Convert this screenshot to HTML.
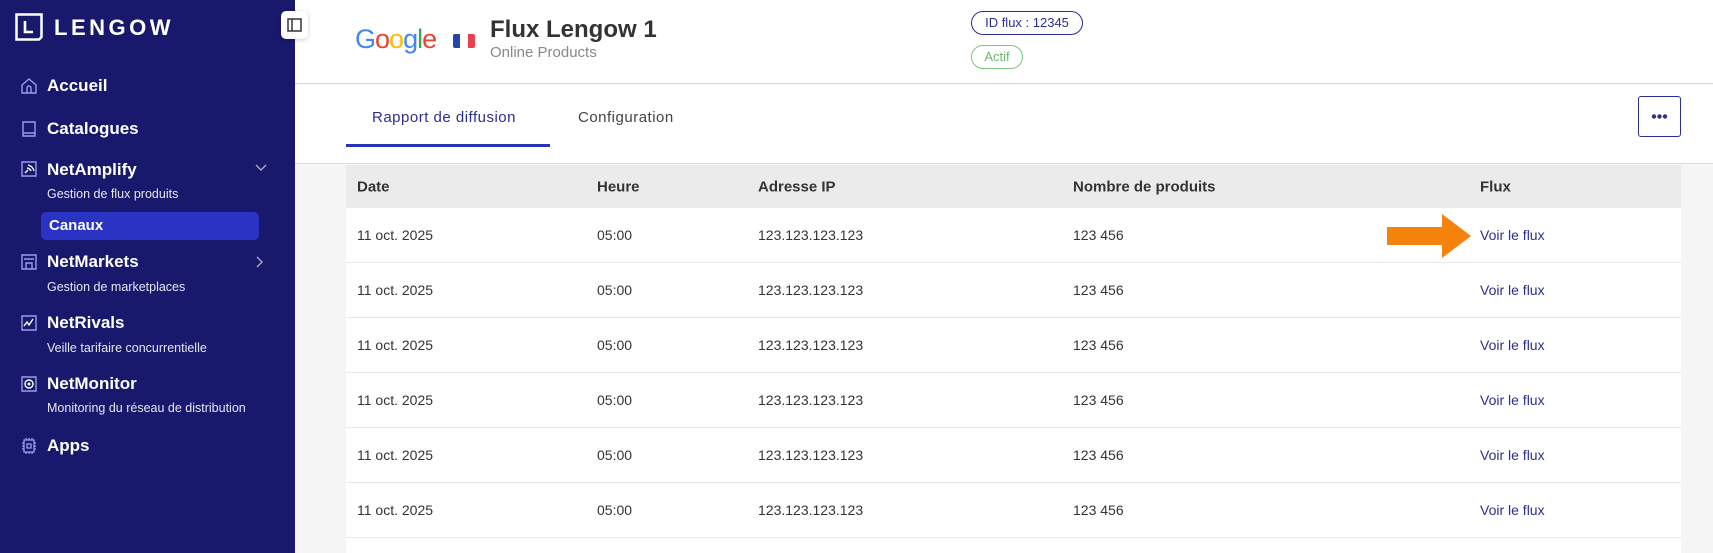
<!DOCTYPE html>
<html style="width:1713px;height:553px;overflow:hidden"><head><meta charset="utf-8"><style>
*{margin:0;padding:0;box-sizing:border-box}
body{width:1713px;height:553px;overflow:hidden;font-family:"Liberation Sans",sans-serif;background:#f5f5f5;position:relative}
.sb{position:absolute;left:0;top:0;width:295px;height:553px;background:#18196c;color:#fff}
.abs{position:absolute}
.nav{position:absolute;left:47px;font-weight:bold;font-size:17px;color:#fff;line-height:20px}
.sub{position:absolute;left:47px;font-size:12.5px;color:#e6e6f5;line-height:16px}
.ic{position:absolute;left:20px;width:18px;height:18px}
.hdr{position:absolute;left:295px;top:0;width:1418px;height:84px;background:#fff;border-bottom:1px solid #ddd}
.tabs{position:absolute;left:295px;top:85px;width:1418px;height:79px;background:#fff;border-bottom:1px solid #ddd}
.tbl{position:absolute;left:346px;top:165px;width:1335px;height:388px;background:#fff;overflow:hidden}
.th{height:43px;background:#ebebeb;position:relative;font-weight:bold;font-size:15px;color:#333}
.tr{height:55px;border-bottom:1px solid #e8e8e8;position:relative;font-size:14px;color:#333}
.c{position:absolute;top:50%;transform:translateY(-50%)}
.l{color:#2b2f8f}
</style></head><body>
<div class="sb">
  <svg class="abs" style="left:15px;top:13px" width="28" height="28" viewBox="0 0 28 28"><path d="M1.5 1.5H26.5V24L24 26.5H1.5Z" fill="none" stroke="#fff" stroke-width="2.5"/><path d="M10 8V19H18" fill="none" stroke="#fff" stroke-width="2.6"/></svg>
  <div class="abs" style="left:54px;top:15px;font-size:22px;letter-spacing:3.5px;font-weight:bold;color:#fff">LENGOW</div>
  <svg class="ic" style="top:77px" viewBox="0 0 18 18"><path d="M2 8L9 2L16 8V16H2Z M7 16V11A2 2 0 0 1 11 11V16" fill="none" stroke="#9a9cf0" stroke-width="1.4"/></svg>
  <div class="nav" style="top:76px">Accueil</div>
  <svg class="ic" style="top:120px" viewBox="0 0 18 18"><path d="M3 2H15V16H3Z M3 13H15" fill="none" stroke="#9a9cf0" stroke-width="1.4"/></svg>
  <div class="nav" style="top:119px">Catalogues</div>
  <svg class="ic" style="top:160px" viewBox="0 0 18 18"><path d="M2 2H16V16H2Z" fill="none" stroke="#9a9cf0" stroke-width="1.4"/><path d="M5 13L8 10M7 8A5 5 0 0 1 11 11M8 5A8 8 0 0 1 14 11" fill="none" stroke="#fff" stroke-width="1.4"/></svg>
  <div class="nav" style="top:160px">NetAmplify</div>
  <svg class="abs" style="left:255px;top:164px" width="12" height="8" viewBox="0 0 12 8"><path d="M1 1L6 6L11 1" fill="none" stroke="#aab" stroke-width="1.4"/></svg>
  <div class="sub" style="top:186px">Gestion de flux produits</div>
  <div class="abs" style="left:41px;top:212px;width:218px;height:28px;background:#2a33c4;border-radius:5px"></div>
  <div class="nav" style="left:49px;top:216px;font-size:15px">Canaux</div>
  <svg class="ic" style="top:253px" viewBox="0 0 18 18"><path d="M2 2H16V16H2Z M4 6H14M6 16V10H12V16" fill="none" stroke="#9a9cf0" stroke-width="1.4"/></svg>
  <div class="nav" style="top:252px">NetMarkets</div>
  <svg class="abs" style="left:256px;top:256px" width="8" height="12" viewBox="0 0 8 12"><path d="M1 1L6 6L1 11" fill="none" stroke="#aab" stroke-width="1.4"/></svg>
  <div class="sub" style="top:279px">Gestion de marketplaces</div>
  <svg class="ic" style="top:314px" viewBox="0 0 18 18"><path d="M2 2H16V16H2Z" fill="none" stroke="#9a9cf0" stroke-width="1.4"/><path d="M4 12L7 8L9 11L13 5" fill="none" stroke="#fff" stroke-width="1.4"/></svg>
  <div class="nav" style="top:313px">NetRivals</div>
  <div class="sub" style="top:340px">Veille tarifaire concurrentielle</div>
  <svg class="ic" style="top:375px" viewBox="0 0 18 18"><path d="M2 2H16V16H2Z" fill="none" stroke="#9a9cf0" stroke-width="1.4"/><circle cx="9" cy="9" r="4" fill="none" stroke="#fff" stroke-width="1.4"/><circle cx="9" cy="9" r="1.5" fill="#fff"/></svg>
  <div class="nav" style="top:374px">NetMonitor</div>
  <div class="sub" style="top:400px">Monitoring du réseau de distribution</div>
  <svg class="ic" style="top:437px" viewBox="0 0 18 18"><path d="M4 3H14V15H4Z M7 7H11V11H7Z M6 1V3M9 1V3M12 1V3M6 15V17M9 15V17M12 15V17M2 6H4M2 9H4M2 12H4M14 6H16M14 9H16M14 12H16" fill="none" stroke="#9a9cf0" stroke-width="1.3"/></svg>
  <div class="nav" style="top:436px">Apps</div>
</div>
<div class="hdr">
  <div class="abs" style="left:60px;top:24px;font-size:27px;letter-spacing:-1px;font-family:'Liberation Sans',sans-serif"><span style="color:#4285f4">G</span><span style="color:#ea4335">o</span><span style="color:#fbbc05">o</span><span style="color:#4285f4">g</span><span style="color:#34a853">l</span><span style="color:#ea4335">e</span></div>
  <div class="abs" style="left:158px;top:34px;width:22px;height:14px;display:flex;border-radius:2px;overflow:hidden"><i style="flex:1;background:#2a45a8"></i><i style="flex:1;background:#fff"></i><i style="flex:1;background:#e84050"></i></div>
  <div class="abs" style="left:195px;top:16px;font-size:24px;font-weight:bold;color:#333">Flux Lengow 1</div>
  <div class="abs" style="left:195px;top:44px;font-size:15px;color:#888">Online Products</div>
  <div class="abs" style="left:676px;top:11px;width:112px;height:24px;border:1.3px solid #2b2f8f;border-radius:12px;color:#2b2f8f;font-size:13px;line-height:22px;text-align:center">ID flux : 12345</div>
  <div class="abs" style="left:676px;top:45px;width:52px;height:24px;border:1.3px solid #7cc47c;border-radius:12px;color:#6cb86c;font-size:13px;line-height:22px;text-align:center">Actif</div>
</div>
<div class="abs" style="left:281px;top:11px;width:27px;height:28px;background:#fff;border-radius:5px;box-shadow:0 1px 4px rgba(0,0,0,.2)"><svg width="27" height="28" viewBox="0 0 27 28"><path d="M7 8H20V20H7Z M11 8V20" fill="none" stroke="#333" stroke-width="1.5"/></svg></div>
<div class="tabs">
  <div class="abs" style="left:77px;top:24px;font-size:15px;color:#2b2f8f;letter-spacing:.5px">Rapport de diffusion</div>
  <div class="abs" style="left:51px;top:59px;width:204px;height:3px;background:#2a33b8"></div>
  <div class="abs" style="left:283px;top:24px;font-size:15px;color:#444;letter-spacing:.5px">Configuration</div>
  <div class="abs" style="left:1343px;top:11px;width:43px;height:41px;border:1.3px solid #2b2f8f;border-radius:3px"><svg width="41" height="39" viewBox="0 0 41 39"><circle cx="15" cy="19.5" r="2.2" fill="#2b2f8f"/><circle cx="20.5" cy="19.5" r="2.2" fill="#2b2f8f"/><circle cx="26" cy="19.5" r="2.2" fill="#2b2f8f"/></svg></div>
</div>
<div class="tbl">
  <div class="th"><span class="c" style="left:11px">Date</span><span class="c" style="left:251px">Heure</span><span class="c" style="left:412px">Adresse IP</span><span class="c" style="left:727px">Nombre de produits</span><span class="c" style="left:1134px">Flux</span></div>
  <div class="tr"><span class="c" style="left:11px">11 oct. 2025</span><span class="c" style="left:251px">05:00</span><span class="c" style="left:412px">123.123.123.123</span><span class="c" style="left:727px">123 456</span><span class="c l" style="left:1134px">Voir le flux</span>
  <svg class="abs" style="left:1041px;top:6px" width="84" height="44" viewBox="0 0 84 44"><path d="M0 13H55V0L84 22L55 44V31H0Z" fill="#f5820a"/></svg></div>
  <div class="tr"><span class="c" style="left:11px">11 oct. 2025</span><span class="c" style="left:251px">05:00</span><span class="c" style="left:412px">123.123.123.123</span><span class="c" style="left:727px">123 456</span><span class="c l" style="left:1134px">Voir le flux</span></div>
  <div class="tr"><span class="c" style="left:11px">11 oct. 2025</span><span class="c" style="left:251px">05:00</span><span class="c" style="left:412px">123.123.123.123</span><span class="c" style="left:727px">123 456</span><span class="c l" style="left:1134px">Voir le flux</span></div>
  <div class="tr"><span class="c" style="left:11px">11 oct. 2025</span><span class="c" style="left:251px">05:00</span><span class="c" style="left:412px">123.123.123.123</span><span class="c" style="left:727px">123 456</span><span class="c l" style="left:1134px">Voir le flux</span></div>
  <div class="tr"><span class="c" style="left:11px">11 oct. 2025</span><span class="c" style="left:251px">05:00</span><span class="c" style="left:412px">123.123.123.123</span><span class="c" style="left:727px">123 456</span><span class="c l" style="left:1134px">Voir le flux</span></div>
  <div class="tr"><span class="c" style="left:11px">11 oct. 2025</span><span class="c" style="left:251px">05:00</span><span class="c" style="left:412px">123.123.123.123</span><span class="c" style="left:727px">123 456</span><span class="c l" style="left:1134px">Voir le flux</span></div>
</div>
</body></html>
